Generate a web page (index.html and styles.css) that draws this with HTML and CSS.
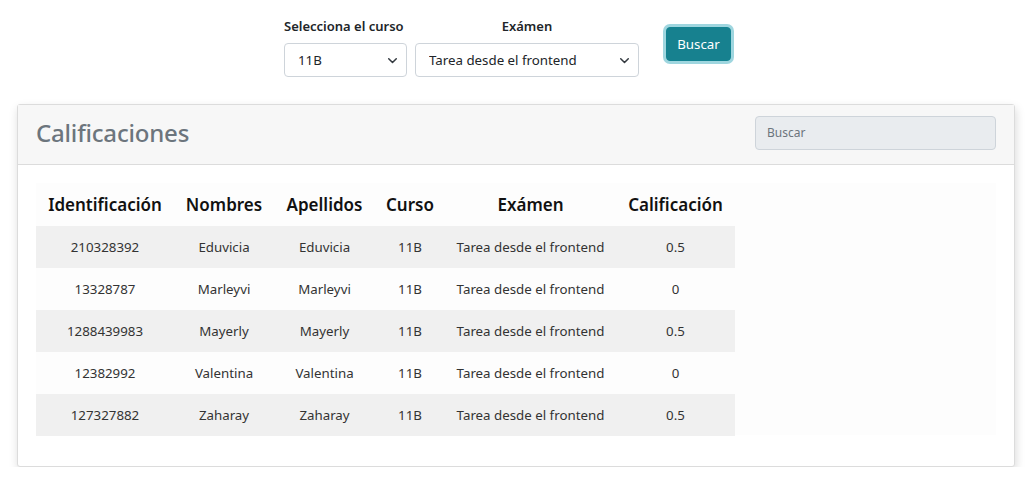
FILE: index.html
```html
<!DOCTYPE html>
<html lang="es">
<head>
<meta charset="utf-8">
<title>Calificaciones</title>
<link rel="stylesheet" href="styles.css">
</head>
<body>
<div class="filters">
  <div class="field">
    <label class="lbl lbl-left">Selecciona el curso</label>
    <div class="select-wrap w1">
      <select class="sel"><option>11B</option></select>
      <svg class="chev" width="11" height="11" viewBox="0 0 16 16"><path d="M2.5 5.5l5.5 5.5 5.5-5.5" fill="none" stroke="#343a40" stroke-width="2.2" stroke-linecap="round" stroke-linejoin="round"/></svg>
    </div>
  </div>
  <div class="field">
    <label class="lbl lbl-center">Exámen</label>
    <div class="select-wrap w2">
      <select class="sel"><option>Tarea desde el frontend</option></select>
      <svg class="chev" width="11" height="11" viewBox="0 0 16 16"><path d="M2.5 5.5l5.5 5.5 5.5-5.5" fill="none" stroke="#343a40" stroke-width="2.2" stroke-linecap="round" stroke-linejoin="round"/></svg>
    </div>
  </div>
  <button class="btn">Buscar</button>
</div>

<div class="card">
  <div class="card-head">
    <h2 class="title">Calificaciones</h2>
    <input class="search" type="text" placeholder="Buscar">
  </div>
  <div class="card-body">
    <div class="table-wrap">
      <table class="grades">
        <thead>
          <tr>
            <th class="c1">Identificación</th>
            <th class="c2">Nombres</th>
            <th class="c3">Apellidos</th>
            <th class="c4">Curso</th>
            <th class="c5">Exámen</th>
            <th class="c6">Calificación</th>
          </tr>
        </thead>
        <tbody>
          <tr><td>210328392</td><td>Eduvicia</td><td>Eduvicia</td><td>11B</td><td>Tarea desde el frontend</td><td>0.5</td></tr>
          <tr><td>13328787</td><td>Marleyvi</td><td>Marleyvi</td><td>11B</td><td>Tarea desde el frontend</td><td>0</td></tr>
          <tr><td>1288439983</td><td>Mayerly</td><td>Mayerly</td><td>11B</td><td>Tarea desde el frontend</td><td>0.5</td></tr>
          <tr><td>12382992</td><td>Valentina</td><td>Valentina</td><td>11B</td><td>Tarea desde el frontend</td><td>0</td></tr>
          <tr><td>127327882</td><td>Zaharay</td><td>Zaharay</td><td>11B</td><td>Tarea desde el frontend</td><td>0.5</td></tr>
        </tbody>
      </table>
    </div>
  </div>
</div>
</body>
</html>
```

FILE: styles.css
```css
* { box-sizing: border-box; }
html, body { margin: 0; padding: 0; background: #fff; }
body {
  font-family: "Noto Sans", "Open Sans", sans-serif;
  color: #212529;
  width: 1035px;
}
.filters {
  display: flex;
  justify-content: center;
  align-items: flex-start;
  gap: 8px;
  padding: 17px 20px 0 0;
  height: 104px;
}
.field {
  display: flex;
  flex-direction: column;
  flex-shrink: 0;
}
.lbl {
  font-size: 13px;
  font-weight: 600;
  line-height: 18px;
  margin-bottom: 8px;
  color: #212529;
}
.lbl-center { text-align: center; }
.select-wrap {
  position: relative;
  height: 34px;
}
.w1 { width: 123px; }
.w2 { width: 224px; }
.sel {
  appearance: none;
  -webkit-appearance: none;
  width: 100%;
  height: 34px;
  border: 1px solid #ced4da;
  border-radius: 4px;
  background: #fff;
  font-family: "Noto Sans", sans-serif;
  font-size: 13.3px;
  color: #212529;
  padding: 0 24px 0 13px;
  line-height: 32px;
}
.chev {
  position: absolute;
  right: 9px;
  top: 12px;
  pointer-events: none;
}
.btn {
  flex-shrink: 0;
  margin-left: 19px;
  margin-top: 10px;
  width: 65px;
  height: 34px;
  border: 1px solid #138391;
  border-radius: 4px;
  background: #17818f;
  color: #fff;
  font-family: "Noto Sans", sans-serif;
  font-size: 13.3px;
  box-shadow: 0 0 0 3px #9fd6df;
  padding: 0;
}
.card {
  margin: 0 20px 0 17px;
  width: 998px;
  border: 1px solid #dcdcdc;
  border-radius: 3px;
  box-shadow: 1px 4px 10px rgba(0,0,0,0.15);
  background: #fff;
  height: 363px;
}
.card-head {
  display: flex;
  align-items: center;
  justify-content: space-between;
  background: #f7f7f7;
  border-bottom: 1px solid #dcdcdc;
  height: 60px;
  padding: 0 18px 4px 18px;
}
.title {
  margin: 0;
  font-size: 24px;
  font-weight: 500;
  color: #6c757d;
  letter-spacing: -0.2px;
}
.search {
  width: 241px;
  height: 34px;
  background: #e9ecef;
  border: 1px solid #ced4da;
  border-radius: 4px;
  padding: 0 11px;
  font-family: "Noto Sans", sans-serif;
  font-size: 12px;
  color: #495057;
}
.search::placeholder { color: #6c757d; }
.card-body {
  padding: 18px 18px 0 18px;
}
.table-wrap {
  background: #fdfdfd;
  width: 960px;
  height: 252px;
}
.grades {
  border-collapse: collapse;
  table-layout: fixed;
  width: 699px;
}
.grades th {
  font-size: 17px;
  font-weight: 600;
  height: 43px;
  text-align: center;
  padding: 0;
  color: #111;
  white-space: nowrap;
}
.grades td {
  font-size: 13.3px;
  height: 42px;
  text-align: center;
  padding: 0;
  color: #333;
  white-space: nowrap;
}
.grades tbody tr:nth-child(odd) { background: #f0f0f0; }
.c1 { width: 138px; }
.c2 { width: 100px; }
.c3 { width: 101px; }
.c4 { width: 70px; }
.c5 { width: 171px; }
.c6 { width: 119px; }
```
